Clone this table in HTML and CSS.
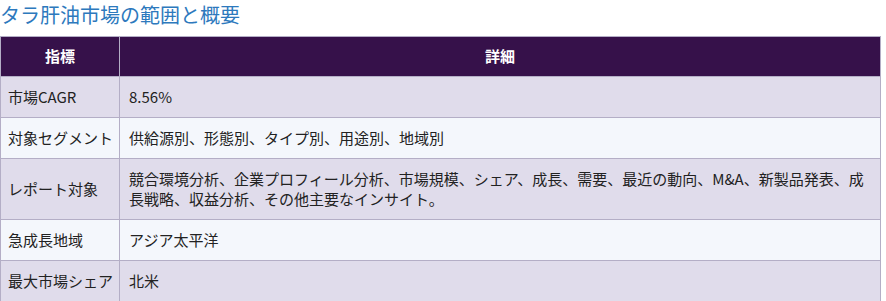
FILE: index.html
```html
<!DOCTYPE html>
<html lang="ja">
<head>
<meta charset="utf-8">
<link rel="stylesheet" href="styles.css">
</head>
<body>
<h2 class="title">タラ肝油市場の範囲と概要</h2>
<table class="scope">
  <thead>
    <tr><th class="col-key">指標</th><th>詳細</th></tr>
  </thead>
  <tbody>
    <tr><td>市場CAGR</td><td>8.56%</td></tr>
    <tr><td>対象セグメント</td><td>供給源別、形態別、タイプ別、用途別、地域別</td></tr>
    <tr><td>レポート対象</td><td>競合環境分析、企業プロフィール分析、市場規模、シェア、成長、需要、最近の動向、M&amp;A、新製品発表、成長戦略、収益分析、その他主要なインサイト。</td></tr>
    <tr><td>急成長地域</td><td>アジア太平洋</td></tr>
    <tr><td>最大市場シェア</td><td>北米</td></tr>
  </tbody>
</table>
</body>
</html>
```
FILE: styles.css
```css
html, body {
  margin: 0;
  padding: 0;
  background: #ffffff;
}
body {
  font-family: "Noto Sans CJK JP", "Noto Sans", sans-serif;
  color: #222222;
}
.title {
  margin: 0;
  height: 36px;
  padding-top: 2px;
  box-sizing: border-box;
  font-size: 20px;
  font-weight: 400;
  line-height: 26px;
  color: #2d79bd;
}
.scope {
  width: 881px;
  border-collapse: collapse;
  font-size: 15px;
  line-height: 20px;
}
.scope th,
.scope td {
  border: 1px solid #b4aec6;
  padding: 10px 7px;
  text-align: left;
  vertical-align: middle;
}
.scope th {
  background: #36114a;
  color: #ffffff;
  font-weight: 700;
  text-align: center;
  padding: 9px 7px 10px;
}
.scope .col-key {
  width: 104px;
}
.scope td:first-child {
  padding-left: 7px;
  padding-right: 6px;
}
.scope td + td {
  padding-left: 9px;
  padding-right: 8px;
}
.scope tbody tr:nth-child(odd) td {
  background: #e0dceb;
}
.scope tbody tr:nth-child(even) td {
  background: #f4f7fc;
}
```
